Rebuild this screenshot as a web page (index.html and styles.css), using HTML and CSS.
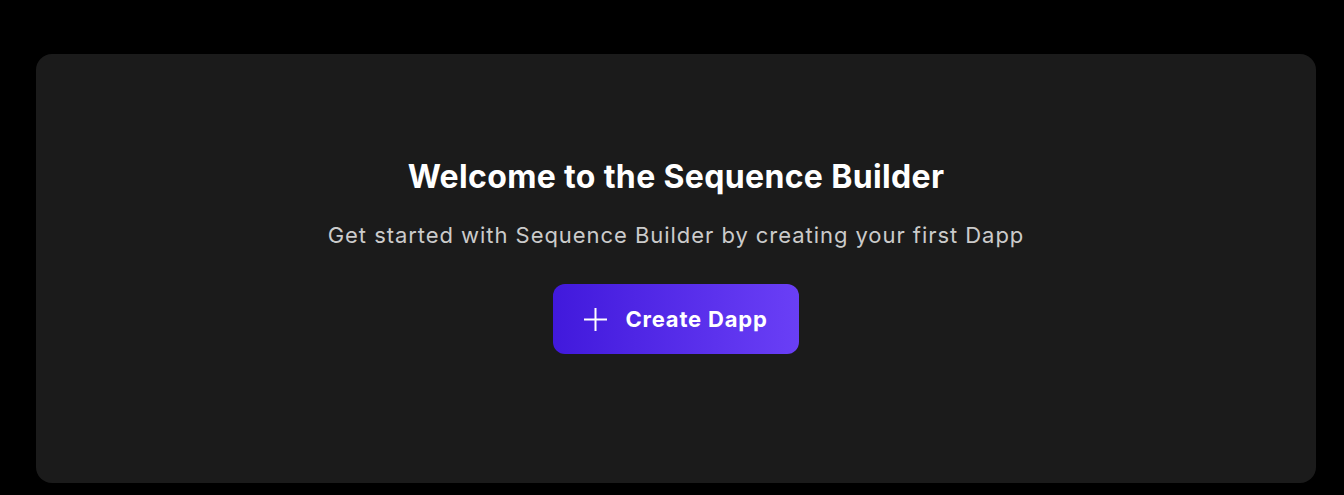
FILE: index.html
```html
<!DOCTYPE html>
<html>
<head>
<meta charset="utf-8">
<link rel="stylesheet" href="styles.css">
</head>
<body>
<div class="page">
  <section class="card">
    <h1 class="title">Welcome to the Sequence Builder</h1>
    <p class="subtitle">Get started with Sequence Builder by creating your first Dapp</p>
    <button class="cta">
      <svg class="plus" width="23" height="23" viewBox="0 0 23 23" fill="none" stroke="#fff" stroke-width="2"><path d="M11.5 0v23M0 11.5h23"/></svg>
      <span>Create Dapp</span>
    </button>
  </section>
</div>
</body>
</html>
```
FILE: styles.css
```css
html, body { margin: 0; padding: 0; background: #000; }
body { font-family: Inter, "Noto Sans", sans-serif; }
.page { padding: 54px 28px 12px 36px; }
.card {
  height: 429px;
  box-sizing: border-box;
  background: #1b1b1b;
  border-radius: 16px;
  display: flex;
  flex-direction: column;
  align-items: center;
  padding-top: 103px;
}
.title {
  margin: 0;
  color: #fff;
  font-size: 32px;
  font-weight: 700;
  line-height: 40px;
  letter-spacing: 0.35px;
}
.subtitle {
  margin: 24px 0 0;
  color: #cbcbcb;
  font-size: 22px;
  line-height: 28px;
  letter-spacing: 0.95px;
}
.cta {
  margin-top: 35px;
  width: 246px;
  height: 70px;
  border: 0;
  border-radius: 12px;
  background: linear-gradient(90deg, #4119dc 0%, #6a3ff6 100%);
  color: #fff;
  font-family: inherit;
  font-size: 22px;
  font-weight: 700;
  letter-spacing: 0.8px;
  display: flex;
  align-items: center;
  justify-content: center;
  gap: 18px;
  padding: 0;
}
.plus { display: block; }
```
